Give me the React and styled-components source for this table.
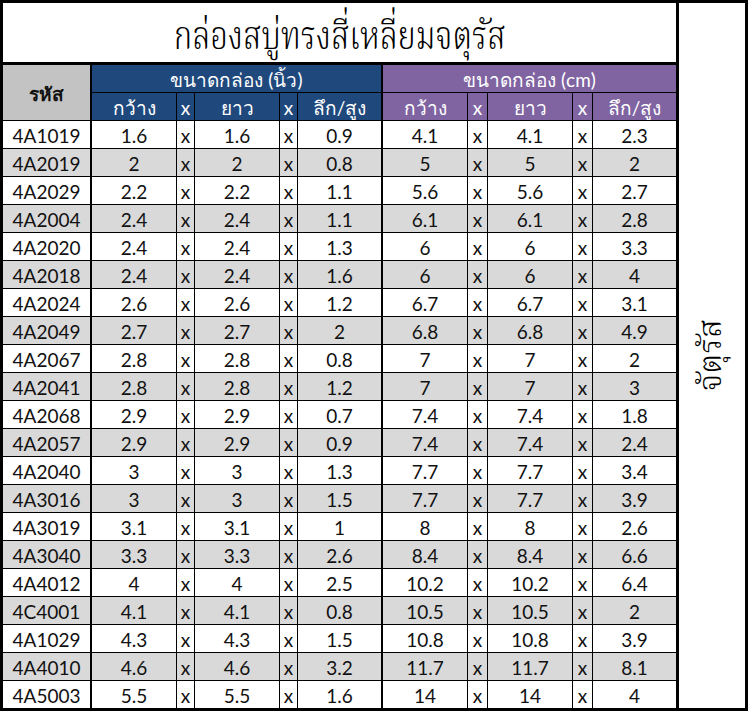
import React from 'react';
import styled, {createGlobalStyle} from 'styled-components';

const BLUE = '#1f497d';
const PURPLE = '#8064a2';
const HEAD_GRAY = '#c3c3c3';
const ROW_GRAY = '#d9d9d9';

const GlobalStyle = createGlobalStyle`
    html, body {
        margin: 0;
        padding: 0;
        background: #fff;
    }
    body {
        font-family: Lato, "Noto Sans", sans-serif;
    }
`;

const Frame = styled.div`
    box-sizing: border-box;
    width: 748px;
    height: 711px;
    border: 3px solid #000;
    display: flex;
    background: #fff;
    overflow: hidden;
`;

const Main = styled.div`
    width: 673px;
    display: flex;
    flex-direction: column;
`;

const Title = styled.h1`
    box-sizing: border-box;
    margin: 0;
    height: 62px;
    padding-top: 10px;
    border-bottom: 3px solid #000;
    display: flex;
    align-items: center;
    justify-content: center;
    font-family: "Noto Serif Thai", "Liberation Serif", serif;
    font-weight: 300;
    font-size: 40px;
    color: #000;
`;

// the original title face is a narrow Thai serif, so squeeze the fallback
const TitleText = styled.span`
    display: inline-block;
    white-space: nowrap;
    transform: scaleX(0.78);
`;

const Grid = styled.div`
    display: grid;
    grid-template-columns: 89px 85px 18px 85px 18px 85px 85px 20px 85px 20px 83px;
    grid-template-rows: repeat(22, 28px) 27px;
`;

const edgeWidth = {thick: '2px', thin: '1px', none: '0'};

const Cell = styled.div`
    box-sizing: border-box;
    display: flex;
    align-items: center;
    justify-content: center;
    border-right: ${p => edgeWidth[p.$edge || 'thin']} solid #000;
    border-bottom: ${p => (p.$last ? '0' : '1px solid #000')};
    background: ${p => p.$bg || '#fff'};
    color: #111;
    font-size: 19px;
    line-height: 1;
    padding-top: 1px;
`;

const HeadCell = styled(Cell)`
    grid-column: ${p => p.$span ? `span ${p.$span}` : 'auto'};
    grid-row: ${p => p.$rows ? `span ${p.$rows}` : 'auto'};
    color: ${p => p.$dark ? '#111' : '#fff'};
    font-size: 19px;
    font-weight: ${p => p.$dark ? 700 : 400};
`;

const Side = styled.div`
    flex: 1;
    border-left: 3px solid #000;
    display: flex;
    align-items: center;
    justify-content: center;
`;

const SideText = styled.div`
    writing-mode: vertical-rl;
    transform: rotate(180deg);
    font-family: "Noto Serif Thai", "Liberation Serif", serif;
    font-weight: 300;
    font-size: 32px;
    color: #000;
`;

const rows = [
    ['4A1019', '1.6', '1.6', '0.9', '4.1', '4.1', '2.3'],
    ['4A2019', '2', '2', '0.8', '5', '5', '2'],
    ['4A2029', '2.2', '2.2', '1.1', '5.6', '5.6', '2.7'],
    ['4A2004', '2.4', '2.4', '1.1', '6.1', '6.1', '2.8'],
    ['4A2020', '2.4', '2.4', '1.3', '6', '6', '3.3'],
    ['4A2018', '2.4', '2.4', '1.6', '6', '6', '4'],
    ['4A2024', '2.6', '2.6', '1.2', '6.7', '6.7', '3.1'],
    ['4A2049', '2.7', '2.7', '2', '6.8', '6.8', '4.9'],
    ['4A2067', '2.8', '2.8', '0.8', '7', '7', '2'],
    ['4A2041', '2.8', '2.8', '1.2', '7', '7', '3'],
    ['4A2068', '2.9', '2.9', '0.7', '7.4', '7.4', '1.8'],
    ['4A2057', '2.9', '2.9', '0.9', '7.4', '7.4', '2.4'],
    ['4A2040', '3', '3', '1.3', '7.7', '7.7', '3.4'],
    ['4A3016', '3', '3', '1.5', '7.7', '7.7', '3.9'],
    ['4A3019', '3.1', '3.1', '1', '8', '8', '2.6'],
    ['4A3040', '3.3', '3.3', '2.6', '8.4', '8.4', '6.6'],
    ['4A4012', '4', '4', '2.5', '10.2', '10.2', '6.4'],
    ['4C4001', '4.1', '4.1', '0.8', '10.5', '10.5', '2'],
    ['4A1029', '4.3', '4.3', '1.5', '10.8', '10.8', '3.9'],
    ['4A4010', '4.6', '4.6', '3.2', '11.7', '11.7', '8.1'],
    ['4A5003', '5.5', '5.5', '1.6', '14', '14', '4'],
];

// cell right-border for each of the 11 grid columns
const edges = ['thick', 'thin', 'thin', 'thin', 'thin', 'thick', 'thin', 'thin', 'thin', 'thin', 'none'];

const SubHeads = ({bg, lastEdge}) => (
    <>
        <HeadCell $bg={bg}>กว้าง</HeadCell>
        <HeadCell $bg={bg}>x</HeadCell>
        <HeadCell $bg={bg}>ยาว</HeadCell>
        <HeadCell $bg={bg}>x</HeadCell>
        <HeadCell $bg={bg} $edge={lastEdge}>ลึก/สูง</HeadCell>
    </>
);

const App = () => {
    return (
        <>
            <GlobalStyle/>
            <Frame>
                <Main>
                    <Title><TitleText>กล่องสบู่ทรงสี่เหลี่ยมจตุรัส</TitleText></Title>
                    <Grid>
                        <HeadCell $rows={2} $bg={HEAD_GRAY} $edge="thick" $dark>รหัส</HeadCell>
                        <HeadCell $span={5} $bg={BLUE} $edge="thick">ขนาดกล่อง (นิ้ว)</HeadCell>
                        <HeadCell $span={5} $bg={PURPLE} $edge="none">ขนาดกล่อง (cm)</HeadCell>
                        <SubHeads bg={BLUE} lastEdge="thick"/>
                        <SubHeads bg={PURPLE} lastEdge="none"/>

                        {rows.map((r, i) => {
                            const cells = [r[0], r[1], 'x', r[2], 'x', r[3], r[4], 'x', r[5], 'x', r[6]];
                            const bg = i % 2 === 1 ? ROW_GRAY : '#fff';
                            const last = i === rows.length - 1;
                            return cells.map((c, j) => (
                                <Cell key={r[0] + j} $bg={bg} $edge={edges[j]} $last={last}>{c}</Cell>
                            ));
                        })}
                    </Grid>
                </Main>
                <Side>
                    <SideText>จัตุรัส</SideText>
                </Side>
            </Frame>
        </>
    );
};

export default App;
